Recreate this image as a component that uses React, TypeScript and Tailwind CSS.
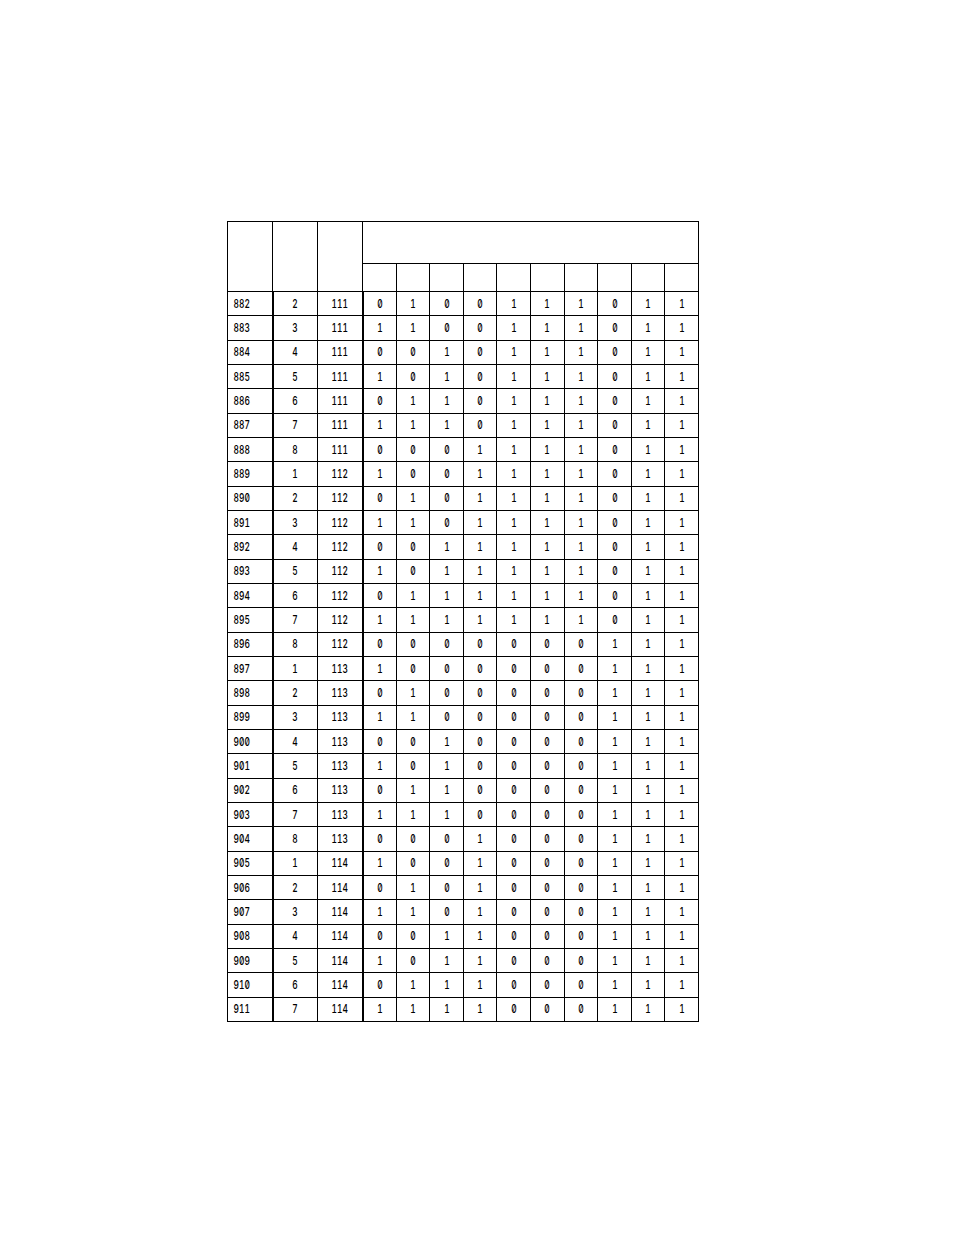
const rows = [
  "882 2 111 0100111011",
  "883 3 111 1100111011",
  "884 4 111 0010111011",
  "885 5 111 1010111011",
  "886 6 111 0110111011",
  "887 7 111 1110111011",
  "888 8 111 0001111011",
  "889 1 112 1001111011",
  "890 2 112 0101111011",
  "891 3 112 1101111011",
  "892 4 112 0011111011",
  "893 5 112 1011111011",
  "894 6 112 0111111011",
  "895 7 112 1111111011",
  "896 8 112 0000000111",
  "897 1 113 1000000111",
  "898 2 113 0100000111",
  "899 3 113 1100000111",
  "900 4 113 0010000111",
  "901 5 113 1010000111",
  "902 6 113 0110000111",
  "903 7 113 1110000111",
  "904 8 113 0001000111",
  "905 1 114 1001000111",
  "906 2 114 0101000111",
  "907 3 114 1101000111",
  "908 4 114 0011000111",
  "909 5 114 1011000111",
  "910 6 114 0111000111",
  "911 7 114 1111000111",
].map((line) => {
  const [id, step, group, bits] = line.split(" ");
  return { id, step, group, bits: bits.split("") };
});

const Num = ({ children }: { children: string }) => (
  <span className="inline-block scale-x-[0.7] font-medium tabular-nums slashed-zero">{children}</span>
);

export default function App() {
  return (
    <div className="min-h-[1235px] bg-white pt-[221px] pl-[227px] font-['Inter',sans-serif] text-[12px] leading-none text-black">
      <table className="w-[471px] table-fixed border-collapse">
        <colgroup>
          <col className="w-[45px]" />
          <col className="w-[45px]" />
          <col className="w-[45px]" />
          {Array.from({ length: 10 }).map((_, i) => (
            <col key={i} className="w-[33.6px]" />
          ))}
        </colgroup>
        <thead>
          <tr className="h-[42px]">
            <th rowSpan={2} className="border border-black" />
            <th rowSpan={2} className="border border-black" />
            <th rowSpan={2} className="border border-black" />
            <th colSpan={10} className="border border-black" />
          </tr>
          <tr className="h-[28px]">
            {Array.from({ length: 10 }).map((_, i) => (
              <th key={i} className="border border-black" />
            ))}
          </tr>
        </thead>
        <tbody>
          {rows.map((r) => (
            <tr key={r.id} className="h-[24.33px]">
              <td className="border border-r-2 border-black pl-[2px] text-left">
                <Num>{r.id}</Num>
              </td>
              <td className="border border-black text-center">
                <Num>{r.step}</Num>
              </td>
              <td className="border border-r-2 border-black text-center">
                <Num>{r.group}</Num>
              </td>
              {r.bits.map((b, i) => (
                <td key={i} className="border border-black text-center">
                  <Num>{b}</Num>
                </td>
              ))}
            </tr>
          ))}
        </tbody>
      </table>
    </div>
  );
}
